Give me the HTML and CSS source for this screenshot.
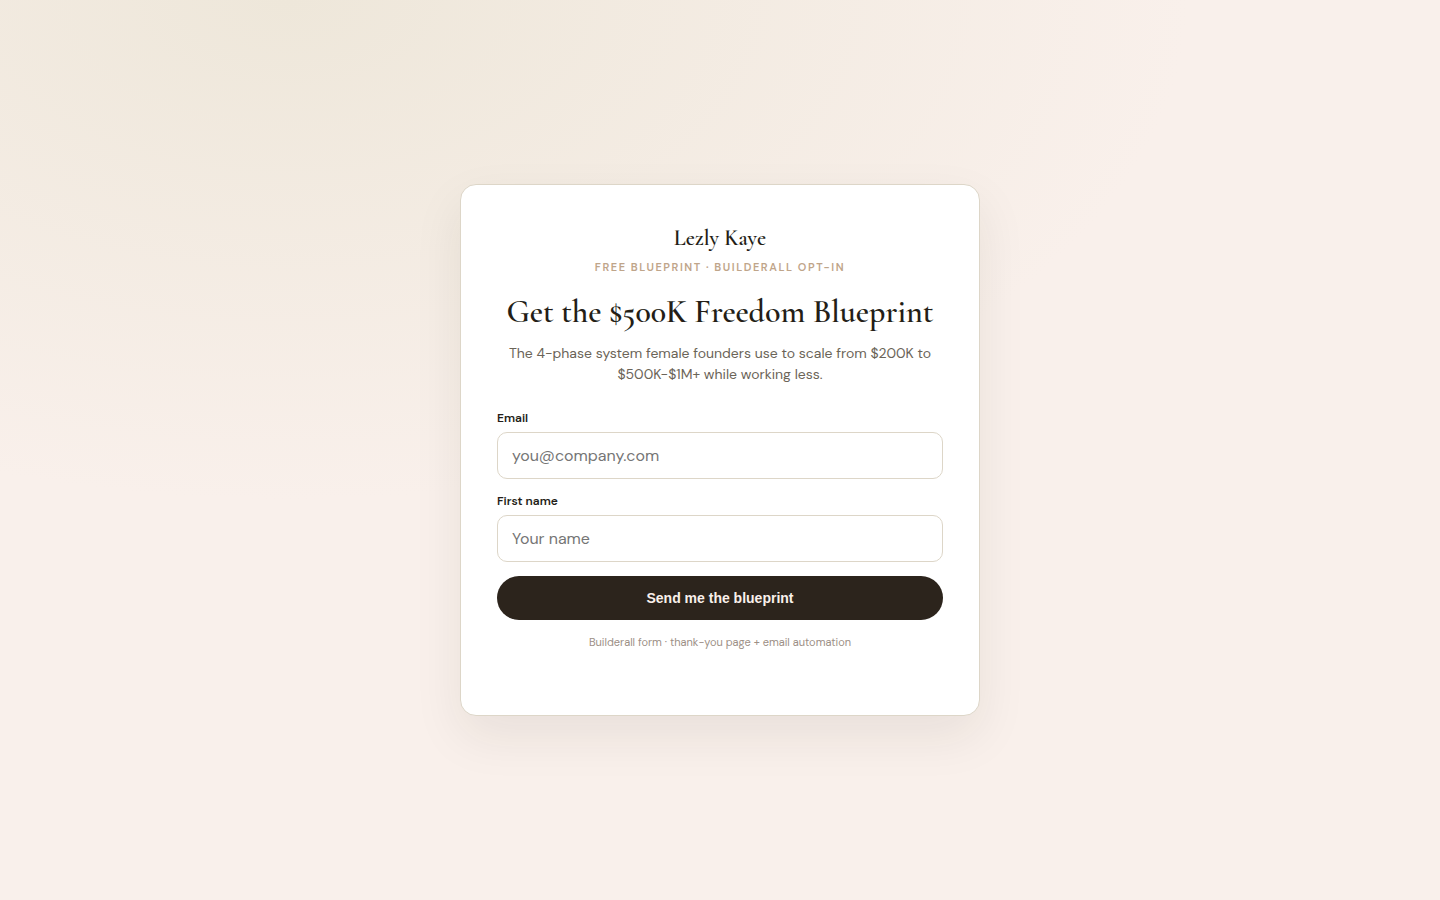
FILE: index.html
```
<!DOCTYPE html>
<html lang="en">
<head>
    <meta charset="UTF-8">
    <meta name="viewport" content="width=device-width, initial-scale=1.0">
    <title>Get the $500K Freedom Blueprint</title>
    <link rel="stylesheet" href="styles.css">
</head>
<body>

    <main class="card">
        <div class="logo">Lezly Kaye</div>
        <p class="eyebrow">Free Blueprint · Builderall opt-in</p>
        <h1>Get the $500K Freedom Blueprint</h1>
        <p class="lead">The 4-phase system female founders use to scale from $200K to $500K-$1M+ while working less.</p>

        <form class="form">
            <label for="email">Email</label>
            <input type="email" id="email" name="email" placeholder="you@company.com">

            <label for="name">First name</label>
            <input type="text" id="name" name="name" placeholder="Your name">

            <button type="submit">Send me the blueprint</button>
        </form>

        <p class="note">Builderall form · thank-you page + email automation</p>
    </main>

</body>
</html>
```
FILE: styles.css
```
* { box-sizing: border-box; }

body {
    margin: 0;
    min-height: 100vh;
    display: flex;
    align-items: center;
    justify-content: center;
    padding: 24px;
    font-family: "DM Sans", Inter, "Liberation Sans", sans-serif;
    color: #241e17;
    background: radial-gradient(ellipse 900px 500px at 20% 0%, #eee7da, transparent), #f9f0eb;
}

.card {
    width: 100%;
    max-width: 520px;
    padding: 40px 36px 64px;
    background: #fff;
    border: 1px solid #ddd6c8;
    border-radius: 16px;
    box-shadow: 0 20px 50px rgba(44, 36, 28, 0.08);
    text-align: center;
}

.logo {
    font-family: "Cormorant Garamond", "Liberation Serif", serif;
    font-size: 22px;
    font-weight: 600;
    line-height: 26px;
}

.eyebrow {
    margin: 8px 0 18px;
    font-size: 11px;
    font-weight: 600;
    line-height: 16px;
    letter-spacing: 0.14em;
    text-transform: uppercase;
    color: #bfa58a;
}

h1 {
    margin: 0 0 12px;
    font-family: "Cormorant Garamond", "Liberation Serif", serif;
    font-size: 32px;
    font-weight: 600;
    line-height: 38px;
}

.lead {
    margin: 0 0 25px;
    font-size: 14px;
    line-height: 21px;
    color: #6b6458;
}

.form { text-align: left; }

label {
    display: block;
    margin-bottom: 6px;
    font-size: 12px;
    font-weight: 600;
    line-height: 16px;
}

input {
    display: block;
    width: 100%;
    margin-bottom: 14px;
    padding: 12px 14px;
    font-family: inherit;
    font-size: 16px;
    line-height: 21px;
    background: #fff;
    border: 1px solid #ddd6c8;
    border-radius: 10px;
}

button {
    display: block;
    width: 100%;
    padding: 14px;
    font-family: "Liberation Sans", Arial, sans-serif;
    font-size: 14px;
    font-weight: 600;
    line-height: 16px;
    color: #f9f0eb;
    background: #2c241c;
    border: none;
    border-radius: 999px;
    cursor: pointer;
}

.note {
    margin: 14px 0 0;
    font-size: 11px;
    line-height: 17px;
    color: #9c8f86;
}
```
